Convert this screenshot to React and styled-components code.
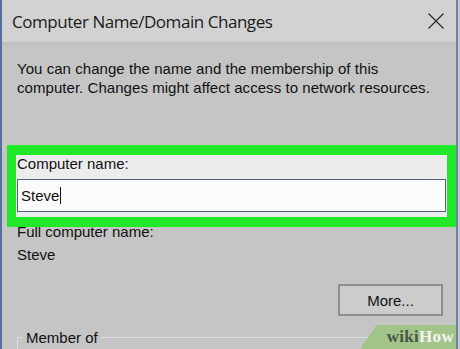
import React from 'react';
import styled, { createGlobalStyle } from 'styled-components';

const GlobalStyle = createGlobalStyle`
  html, body {
    margin: 0;
    padding: 0;
    background: #c9c9c9;
  }
`;

const Window = styled.div`
  position: relative;
  width: 454px;
  height: 349px;
  overflow: hidden;
  display: flex;
  flex-direction: column;
  background-color: #c5c5c5;
  border-left: 2px solid #56709a;
  border-right: 2px solid #6d86ae;
  font-family: "Liberation Sans", Arial, sans-serif;
  color: #111;
`;

const TitleBar = styled.div`
  height: 42px;
  flex-shrink: 0;
  display: flex;
  align-items: center;
  justify-content: space-between;
  padding: 0 12px 0 10px;
  background-color: #d2d2d2;
  font-family: "Open Sans", "Noto Sans", sans-serif;
  font-size: 17px;
  letter-spacing: -0.45px;
  color: #1b1b1b;
`;

const CloseButton = styled.svg`
  width: 16px;
  height: 16px;
  margin-top: -1px;
`;

const Body = styled.div`
  flex: 1;
  display: flex;
  flex-direction: column;
  padding-top: 17px;
  box-shadow: inset 0 5px 4px -3px rgba(0, 0, 0, 0.05);
`;

const Intro = styled.p`
  margin: 0 0 48px 15px;
  font-size: 15px;
  line-height: 19px;
  letter-spacing: 0.05px;
`;

const Highlight = styled.div`
  position: relative;
  z-index: 1;
  margin-left: 5px;
  width: 429px;
  display: flex;
  flex-direction: column;
  gap: 7px;
  padding: 0 1px 5px 1px;
  background-color: #ececec;
  border: solid #22e82a;
  border-width: 10px 9px 10px 9px;
`;

const Label = styled.div`
  font-size: 15px;
  line-height: 17px;
  margin: ${p => p.$margin || '0'};
`;

const NameInput = styled.div`
  height: 31px;
  display: flex;
  align-items: center;
  padding-left: 3px;
  background-color: #fbfbfb;
  border: 1px solid #55627e;
  font-size: 15px;
`;

const Caret = styled.span`
  display: inline-block;
  width: 1px;
  height: 17px;
  margin-left: 1px;
  background-color: #111;
`;

const ButtonRow = styled.div`
  display: flex;
  justify-content: flex-end;
  margin: 21px 13px 0 0;
`;

const Button = styled.div`
  width: 101px;
  height: 28px;
  display: flex;
  align-items: center;
  justify-content: center;
  background-color: #cccccc;
  border: 2px solid #8e8e8e;
  font-size: 15px;
`;

const GroupBox = styled.fieldset`
  margin: 13px 0 0 15px;
  padding: 0;
  height: 40px;
  border: none;
  border-top: 1px solid #dcdcdc;
  border-left: 1px solid #dcdcdc;
`;

const Legend = styled.legend`
  padding: 0 3px;
  margin-left: 5px;
  font-size: 15px;
  line-height: 17px;
`;

const Watermark = styled.div`
  position: absolute;
  right: -2px;
  bottom: 0;
  width: 94px;
  height: 24px;
  display: flex;
  align-items: center;
  justify-content: flex-end;
  padding-right: 4px;
  background-color: #a2c48b;
  clip-path: polygon(17% 0, 100% 0, 100% 100%, 0 100%);
  font-family: "Liberation Serif", "Times New Roman", serif;
  font-weight: bold;
  font-size: 17px;
  letter-spacing: 0.3px;
`;

const Wiki = styled.span`
  color: ${p => (p.$light ? '#f4f4f0' : '#4b5548')};
`;

export default function App() {
  return (
    <>
      <GlobalStyle />
      <Window>
        <TitleBar>
          <span>Computer Name/Domain Changes</span>
          <CloseButton viewBox="0 0 16 16">
            <path d="M0.5 0.5 L15.5 15.5 M15.5 0.5 L0.5 15.5" stroke="#222" strokeWidth="1.1" fill="none" />
          </CloseButton>
        </TitleBar>
        <Body>
          <Intro>
            You can change the name and the membership of this
            <br />
            computer. Changes might affect access to network resources.
          </Intro>
          <Highlight>
            <Label>Computer name:</Label>
            <NameInput>
              Steve<Caret />
            </NameInput>
          </Highlight>
          <Label $margin="-4px 0 0 15px">Full computer name:</Label>
          <Label $margin="6px 0 0 15px">Steve</Label>
          <ButtonRow>
            <Button>More...</Button>
          </ButtonRow>
          <GroupBox>
            <Legend>Member of</Legend>
          </GroupBox>
        </Body>
        <Watermark>
          <Wiki>wiki</Wiki>
          <Wiki $light>How</Wiki>
        </Watermark>
      </Window>
    </>
  );
}
